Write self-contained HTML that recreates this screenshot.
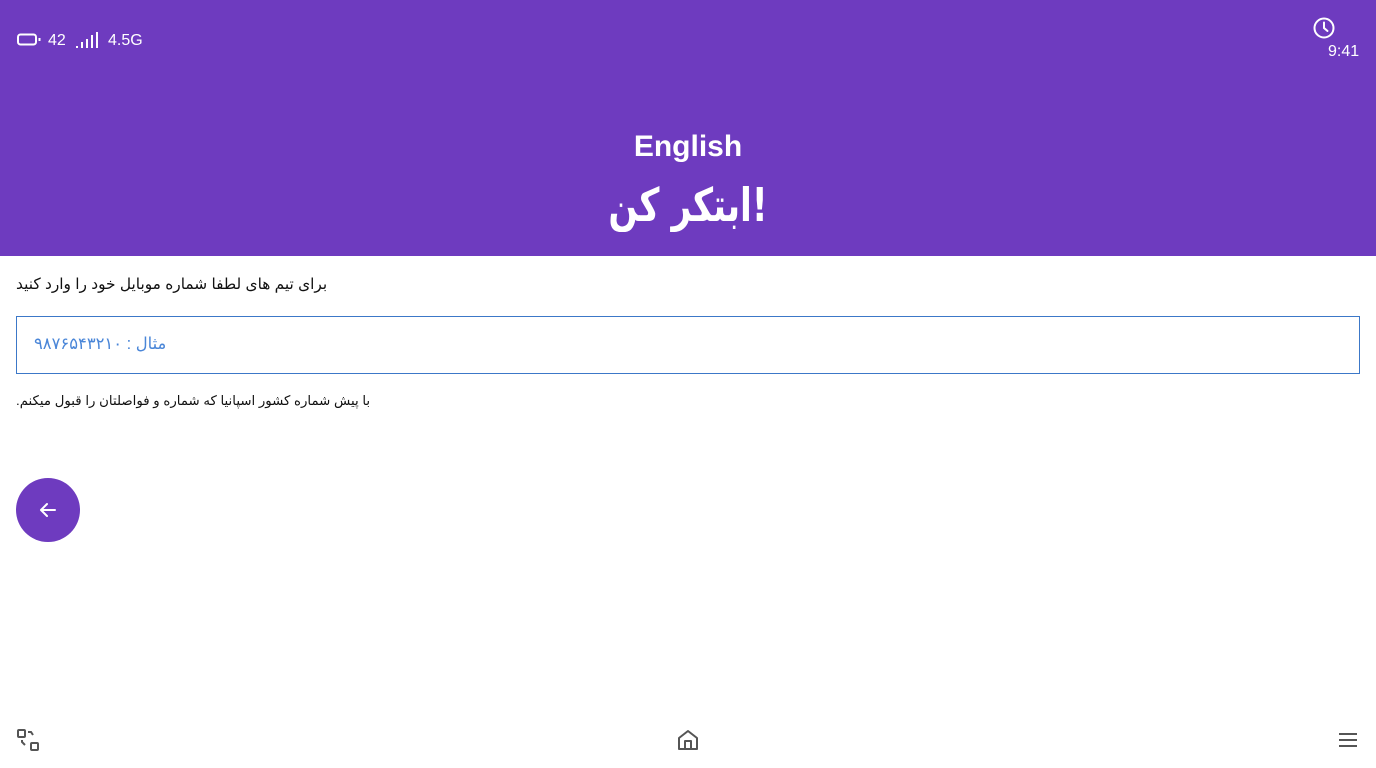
<!DOCTYPE html>
<html><head><meta charset="utf-8"><style>
*{margin:0;padding:0;box-sizing:border-box}
body{width:1376px;height:768px;background:#fff;position:relative;overflow:hidden;font-family:"Liberation Sans","DejaVu Sans",sans-serif}
.hdr{position:absolute;left:0;top:0;width:1376px;height:256px;background:#6e3bbf;color:#fff}
.abs{position:absolute}
</style></head><body>
<div class="hdr">
  <svg class="abs" style="left:17px;top:33px" width="24" height="14" viewBox="0 0 24 14"><rect x="1" y="1.5" width="18" height="10" rx="2.5" fill="none" stroke="#fff" stroke-width="2"/><rect x="21.5" y="5" width="2" height="3" fill="#fff"/></svg>
  <div class="abs" style="left:48px;top:32px;font-size:16px">42</div>
  <svg class="abs" style="left:76px;top:31px" width="24" height="18" viewBox="0 0 24 18"><g fill="#fff"><rect x="0" y="15" width="2" height="2"/><rect x="5" y="11" width="2" height="6"/><rect x="10" y="8" width="2" height="9"/><rect x="15" y="4" width="2" height="13"/><rect x="20" y="1" width="2" height="16"/></g></svg>
  <div class="abs" style="left:108px;top:32px;font-size:16px">4.5G</div>
  <svg class="abs" style="left:1312px;top:16px" width="24" height="24" viewBox="0 0 24 24"><circle cx="12" cy="12" r="9.5" fill="none" stroke="#fff" stroke-width="2"/><path d="M12 6.5V12l3.5 3" fill="none" stroke="#fff" stroke-width="2" stroke-linecap="round"/></svg>
  <div class="abs" style="left:1328px;top:43px;font-size:16px">9:41</div>
  <div class="abs" style="left:0;width:1376px;top:130px;text-align:center;font-size:30px;font-weight:bold">English</div>
  <div class="abs" style="left:0;width:1376px;top:178px;text-align:center;font-size:46px;font-weight:bold;font-family:'DejaVu Sans',sans-serif;transform:scaleX(0.75)">ابتکر کن!</div>
</div>
<div class="abs" style="left:16px;top:275px;font-size:15.4px;color:#111" dir="rtl">برای تیم های لطفا شماره موبایل خود را وارد کنید</div>
<div class="abs" style="left:16px;top:316px;width:1344px;height:58px;border:1px solid #3c78c8"></div>
<div class="abs" style="left:34px;top:334px;font-size:16.4px;color:#4a86d8" dir="rtl">مثال : ۹۸۷۶۵۴۳۲۱۰</div>
<div class="abs" style="left:16px;top:393px;font-size:13.3px;color:#111" dir="rtl">با پیش شماره کشور اسپانیا که شماره و فواصلتان را قبول میکنم.</div>
<div class="abs" style="left:16px;top:478px;width:64px;height:64px;border-radius:50%;background:#6e3bbf"></div>
<svg class="abs" style="left:38px;top:500px" width="20" height="20" viewBox="0 0 20 20"><path d="M17 10H3M9 4l-6 6 6 6" fill="none" stroke="#fff" stroke-width="2" stroke-linecap="round" stroke-linejoin="round"/></svg>
<svg class="abs" style="left:16px;top:728px" width="24" height="24" viewBox="0 0 24 24" fill="none" stroke="#555" stroke-width="2"><rect x="2" y="2" width="7" height="7" rx="1"/><rect x="15" y="15" width="7" height="7" rx="1"/><path d="M12 4h3l2 3M6 12v2l3 3"/></svg>
<svg class="abs" style="left:676px;top:728px" width="24" height="24" viewBox="0 0 24 24" fill="none" stroke="#555" stroke-width="2" stroke-linejoin="round"><path d="M3 10l9-7 9 7v11H3z"/><path d="M9 21v-8h6v8"/></svg>
<svg class="abs" style="left:1336px;top:729px" width="24" height="22" viewBox="0 0 24 22" stroke="#555" stroke-width="2"><path d="M3 5h18M3 11h18M3 17h18"/></svg>
</body></html>
